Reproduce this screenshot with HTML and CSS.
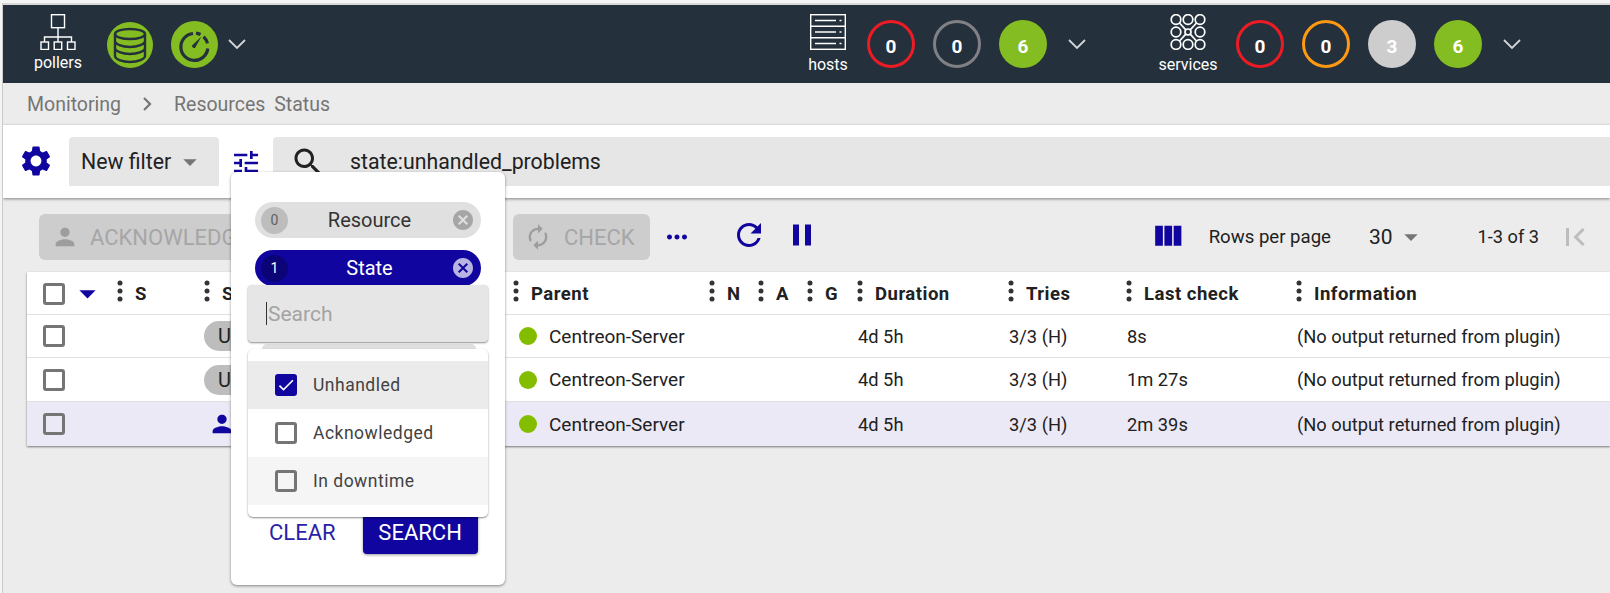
FILE: index.html
```html
<!DOCTYPE html>
<html lang="en">
<head>
  <meta charset="UTF-8">
  <title>Resources Status</title>
  <link rel="stylesheet" href="styles.css">
</head>
<body>
  <svg class="sprites" width="0" height="0">
    <symbol id="i-gear" viewBox="0 0 24 24"><path d="M19.14 12.94c.04-.3.06-.61.06-.94 0-.32-.02-.64-.07-.94l2.03-1.58c.18-.14.23-.41.12-.61l-1.92-3.32c-.12-.22-.37-.29-.59-.22l-2.39.96c-.5-.38-1.03-.7-1.62-.94l-.36-2.54c-.04-.24-.24-.41-.48-.41h-3.84c-.24 0-.43.17-.47.41l-.36 2.54c-.59.24-1.13.57-1.62.94l-2.39-.96c-.22-.08-.47 0-.59.22L2.74 8.87c-.12.21-.08.47.12.61l2.03 1.58c-.05.3-.09.63-.09.94s.02.64.07.94l-2.03 1.58c-.18.14-.23.41-.12.61l1.92 3.32c.12.22.37.29.59.22l2.39-.96c.5.38 1.03.7 1.62.94l.36 2.54c.05.24.24.41.48.41h3.84c.24 0 .44-.17.47-.41l.36-2.54c.59-.24 1.13-.56 1.62-.94l2.39.96c.22.08.47 0 .59-.22l1.92-3.32c.12-.22.07-.47-.12-.61l-2.01-1.58zM12 15.6c-1.98 0-3.6-1.62-3.6-3.6s1.62-3.6 3.6-3.6 3.6 1.62 3.6 3.6-1.62 3.6-3.6 3.6z"/></symbol>
    <symbol id="i-tune" viewBox="0 0 24 24"><path d="M3 17v2h6v-2H3zM3 5v2h10V5H3zm10 16v-2h8v-2h-8v-2h-2v6h2zM7 9v2H3v2h4v2h2V9H7zm14 4v-2H11v2h10zm-6-4h2V7h4V5h-4V3h-2v6z"/></symbol>
    <symbol id="i-search" viewBox="0 0 24 24"><path d="M15.5 14h-.79l-.28-.27C15.41 12.59 16 11.11 16 9.5 16 5.91 13.09 3 9.5 3S3 5.91 3 9.5 5.91 16 9.5 16c1.61 0 3.09-.59 4.23-1.57l.27.28v.79l5 4.99L20.49 19l-4.99-5zm-6 0C7.01 14 5 11.99 5 9.5S7.01 5 9.5 5 14 7.01 14 9.5 11.99 14 9.5 14z"/></symbol>
    <symbol id="i-person" viewBox="0 0 24 24"><path d="M12 12c2.21 0 4-1.79 4-4s-1.79-4-4-4-4 1.79-4 4 1.79 4 4 4zm0 2c-2.67 0-8 1.34-8 4v2h16v-2c0-2.66-5.33-4-8-4z"/></symbol>
    <symbol id="i-renew" viewBox="0 0 24 24"><path d="M12 6v3l4-4-4-4v3c-4.42 0-8 3.58-8 8 0 1.57.46 3.03 1.24 4.26L6.7 14.8c-.45-.83-.7-1.79-.7-2.8 0-3.31 2.69-6 6-6zm6.76 1.74L17.3 9.2c.44.84.7 1.79.7 2.8 0 3.31-2.69 6-6 6v-3l-4 4 4 4v-3c4.42 0 8-3.58 8-8 0-1.57-.46-3.03-1.24-4.26z"/></symbol>
    <symbol id="i-more" viewBox="0 0 24 24"><path d="M6 10c-1.1 0-2 .9-2 2s.9 2 2 2 2-.9 2-2-.9-2-2-2zm12 0c-1.1 0-2 .9-2 2s.9 2 2 2 2-.9 2-2-.9-2-2-2zm-6 0c-1.1 0-2 .9-2 2s.9 2 2 2 2-.9 2-2-.9-2-2-2z"/></symbol>
    <symbol id="i-refresh" viewBox="0 0 24 24"><path d="M17.65 6.35C16.2 4.9 14.21 4 12 4c-4.42 0-7.99 3.58-7.99 8s3.57 8 7.99 8c3.73 0 6.84-2.55 7.73-6h-2.08c-.82 2.33-3.04 4-5.65 4-3.31 0-6-2.69-6-6s2.69-6 6-6c1.66 0 3.14.69 4.22 1.78L13 11h7V4l-2.35 2.35z"/></symbol>
    <symbol id="i-pause" viewBox="0 0 24 24"><path d="M6 19h4V5H6v14zm8-14v14h4V5h-4z"/></symbol>
    <symbol id="i-columns" viewBox="0 0 24 24"><path d="M10 18h5V5h-5v13zm-6 0h5V5H4v13zM16 5v13h5V5h-5z"/></symbol>
    <symbol id="i-first" viewBox="0 0 24 24"><path d="M18.41 16.59L13.82 12l4.59-4.59L17 6l-6 6 6 6zM6 6h2v12H6z"/></symbol>
    <symbol id="i-cancel" viewBox="0 0 24 24"><path d="M12 2C6.47 2 2 6.47 2 12s4.47 10 10 10 10-4.47 10-10S17.53 2 12 2zm5 13.59L15.59 17 12 13.41 8.41 17 7 15.59 10.59 12 7 8.41 8.41 7 12 10.59 15.59 7 17 8.41 13.41 12 17 15.59z"/></symbol>
    <symbol id="i-drop" viewBox="0 0 24 24"><path d="M7 10l5 5 5-5z"/></symbol>
    <symbol id="i-check" viewBox="0 0 24 24"><path d="M9 16.17L4.83 12l-1.42 1.41L9 19 21 7l-1.41-1.41z"/></symbol>
    <symbol id="i-chevron" viewBox="0 0 18 11"><path d="M1 1l8 8 8-8" fill="none" stroke="currentColor" stroke-width="1.8"/></symbol>
    <symbol id="i-dots" viewBox="0 0 6 22"><circle cx="3" cy="3" r="2.5"/><circle cx="3" cy="11" r="2.5"/><circle cx="3" cy="19" r="2.5"/></symbol>
  </svg>

  <div class="page">
    <header class="topbar">
      <div class="top-item pollers">
        <svg class="top-icon" viewBox="0 0 36 36">
          <rect x="11.500" y="0.700" width="13" height="13"/>
          <path d="M18 14v9M4.500 28v-5h27v5M18 23v5"/>
          <rect x="1" y="28" width="7.500" height="7.500"/>
          <rect x="14.200" y="28" width="7.500" height="7.500"/>
          <rect x="27.500" y="28" width="7.500" height="7.500"/>
        </svg>
        <span>pollers</span>
      </div>
      <svg class="state-icon db" viewBox="0 0 46 46">
        <circle cx="23" cy="23" r="23" fill="#84bd21"/>
        <g fill="none" stroke="#24303c" stroke-width="2.400">
          <ellipse cx="23" cy="12" rx="15" ry="5"/>
          <path d="M8 12v22c0 3 7 6 15 6s15-3 15-6V12M8 19c0 3 7 6 15 6s15-3 15-6M8 26c0 3 7 6 15 6s15-3 15-6"/>
        </g>
      </svg>
      <svg class="state-icon gauge" viewBox="0 0 47 47">
        <circle cx="23.500" cy="23.500" r="23.500" fill="#84bd21"/>
        <g fill="none" stroke="#24303c" stroke-width="3.200">
          <path d="M36.800 27.500A13.500 13.500 0 1 1 22 12.500"/>
          <path d="M25 12.200a13.500 13.500 0 0 1 4.500 1.300M32.500 15.800a13.500 13.500 0 0 1 4 6.500"/>
        </g>
        <path d="M21 24.500l9.500-9-6.500 11.500a2.400 2.400 0 0 1-3-2.500z" fill="#24303c"/>
      </svg>
      <svg class="chevron first-chevron"><use href="#i-chevron"/></svg>

      <div class="top-item hosts">
        <svg class="top-icon" viewBox="0 0 36 36">
          <rect x="0.700" y="0.700" width="34.600" height="34.600"/>
          <path d="M1 12.200h34M1 23.700h34M5 6.500h21M5 18h21M5 29.500h21"/>
          <path d="M29.500 6.500h2M29.500 18h2M29.500 29.500h2"/>
        </svg>
        <span>hosts</span>
      </div>
      <div class="counters">
        <div class="counter outline red">0</div>
        <div class="counter outline grey">0</div>
        <div class="counter green">6</div>
      </div>
      <svg class="chevron"><use href="#i-chevron"/></svg>

      <div class="top-item services">
        <svg class="top-icon services-icon" viewBox="0 0 36 36">
          <circle cx="6" cy="5.500" r="4.800"/><circle cx="18" cy="5.500" r="4.800"/><circle cx="30" cy="5.500" r="4.800"/>
          <circle cx="6" cy="18" r="4.800"/><circle cx="18" cy="18" r="3"/><circle cx="30" cy="18" r="4.800"/>
          <circle cx="6" cy="30.500" r="4.800"/><circle cx="18" cy="30.500" r="4.800"/><circle cx="30" cy="30.500" r="4.800"/>
          <path d="M9.500 9l6.300 6.800M26.500 9l-6.300 6.800M9.500 27l6.300-6.800M26.500 27l-6.300-6.800"/>
        </svg>
        <span>services</span>
      </div>
      <div class="counters">
        <div class="counter outline red">0</div>
        <div class="counter outline orange">0</div>
        <div class="counter silver">3</div>
        <div class="counter green">6</div>
      </div>
      <svg class="chevron"><use href="#i-chevron"/></svg>
    </header>

    <nav class="crumbs">
      <span>Monitoring</span>
      <svg viewBox="0 0 12 14"><path d="M2 1l6 6-6 6" fill="none" stroke="currentColor" stroke-width="2.200"/></svg>
      <span>Resources Status</span>
    </nav>

    <section class="filter-bar">
      <svg class="icon gear"><use href="#i-gear"/></svg>
      <div class="filter-select">New filter <svg class="drop"><use href="#i-drop"/></svg></div>
      <svg class="icon tune"><use href="#i-tune"/></svg>
      <div class="search-input">
        <svg class="icon"><use href="#i-search"/></svg>
        <span>state:unhandled_problems</span>
      </div>
    </section>

    <section class="actions">
      <div class="action ack"><svg class="icon"><use href="#i-person"/></svg>ACKNOWLEDGE</div>
      <div class="action check"><svg class="icon"><use href="#i-renew"/></svg>CHECK</div>
      <svg class="icon more"><use href="#i-more"/></svg>
      <svg class="icon refresh"><use href="#i-refresh"/></svg>
      <svg class="icon pause"><use href="#i-pause"/></svg>
      <div class="pager">
        <svg class="icon columns"><use href="#i-columns"/></svg>
        <span class="rows-label">Rows per page</span>
        <span class="rows-value">30</span>
        <svg class="drop"><use href="#i-drop"/></svg>
        <span class="rows-range">1-3 of 3</span>
        <svg class="icon first-page"><use href="#i-first"/></svg>
      </div>
    </section>

    <section class="table">
      <div class="row head">
        <div class="cell"><span class="box"></span></div>
        <div class="cell"><svg class="sort"><use href="#i-drop"/></svg></div>
        <div class="cell"><svg class="dots"><use href="#i-dots"/></svg>S</div>
        <div class="cell"><svg class="dots"><use href="#i-dots"/></svg>S</div>
        <div class="cell"><svg class="dots"><use href="#i-dots"/></svg>Parent</div>
        <div class="cell"><svg class="dots"><use href="#i-dots"/></svg>N</div>
        <div class="cell"><svg class="dots"><use href="#i-dots"/></svg>A</div>
        <div class="cell"><svg class="dots"><use href="#i-dots"/></svg>G</div>
        <div class="cell"><svg class="dots"><use href="#i-dots"/></svg>Duration</div>
        <div class="cell"><svg class="dots"><use href="#i-dots"/></svg>Tries</div>
        <div class="cell"><svg class="dots"><use href="#i-dots"/></svg>Last check</div>
        <div class="cell"><svg class="dots"><use href="#i-dots"/></svg>Information</div>
      </div>
      <div class="row">
        <div class="cell"><span class="box"></span></div>
        <div class="cell"></div>
        <div class="cell"></div>
        <div class="cell"><span class="status-chip">Unknown</span></div>
        <div class="cell parent"><span class="dot"></span>Centreon-Server</div>
        <div class="cell"></div>
        <div class="cell"></div>
        <div class="cell"></div>
        <div class="cell text">4d 5h</div>
        <div class="cell text">3/3 (H)</div>
        <div class="cell text">8s</div>
        <div class="cell text">(No output returned from plugin)</div>
      </div>
      <div class="row">
        <div class="cell"><span class="box"></span></div>
        <div class="cell"></div>
        <div class="cell"></div>
        <div class="cell"><span class="status-chip">Unknown</span></div>
        <div class="cell parent"><span class="dot"></span>Centreon-Server</div>
        <div class="cell"></div>
        <div class="cell"></div>
        <div class="cell"></div>
        <div class="cell text">4d 5h</div>
        <div class="cell text">3/3 (H)</div>
        <div class="cell text">1m 27s</div>
        <div class="cell text">(No output returned from plugin)</div>
      </div>
      <div class="row selected">
        <div class="cell"><span class="box"></span></div>
        <div class="cell"></div>
        <div class="cell"></div>
        <div class="cell"><svg class="icon acked"><use href="#i-person"/></svg></div>
        <div class="cell parent"><span class="dot"></span>Centreon-Server</div>
        <div class="cell"></div>
        <div class="cell"></div>
        <div class="cell"></div>
        <div class="cell text">4d 5h</div>
        <div class="cell text">3/3 (H)</div>
        <div class="cell text">2m 39s</div>
        <div class="cell text">(No output returned from plugin)</div>
      </div>
    </section>
  </div>

  <!-- criteria popup lies over the filter bar and the table -->
  <div class="popup">
    <div class="chip">
      <span class="chip-count">0</span>
      <span class="chip-label">Resource</span>
      <svg class="chip-clear"><use href="#i-cancel"/></svg>
    </div>
    <div class="chip active">
      <span class="chip-count">1</span>
      <span class="chip-label">State</span>
      <svg class="chip-clear"><use href="#i-cancel"/></svg>
    </div>
    <div class="popup-search"><span class="caret"></span><span>Search</span></div>
    <div class="list-edge"></div>
    <ul class="options">
      <li class="current"><span class="box checked"><svg><use href="#i-check"/></svg></span>Unhandled</li>
      <li><span class="box"></span>Acknowledged</li>
      <li class="hover"><span class="box"></span>In downtime</li>
    </ul>
    <div class="popup-buttons">
      <span class="clear-btn">CLEAR</span>
      <span class="search-btn">SEARCH</span>
    </div>
  </div>
</body>
</html>
```

FILE: styles.css
```css
* {
  box-sizing: border-box;
}

html, body {
  height: 100%;
}

body {
  margin: 0;
  overflow: hidden;
  background-color: #f4f4f4;
  font-family: Roboto, "Liberation Sans", sans-serif;
  color: #212121;
  position: relative;
}

.sprites {
  position: absolute;
}

svg {
  display: block;
  fill: currentColor;
  flex: none;
}

.page {
  height: 100%;
  margin: 3px 0 0 2px;
  padding-top: 2px;
  border-left: 1px solid #cbcbcb;
  background-color: #ececec;
  background-image: linear-gradient(#d8d8d8, #d8d8d8);
  background-repeat: no-repeat;
  background-size: 100% 2px;
  overflow: hidden;
}

.icon {
  width: 24px;
  height: 24px;
}

/* top bar */
.topbar {
  display: flex;
  align-items: center;
  height: 78px;
  padding-left: 25px;
  background-color: #24303c;
  color: #fff;
}

.top-item {
  display: flex;
  flex-direction: column;
  align-items: center;
  width: 60px;
  height: 64px;
  margin-top: 3px;
  font-size: 16px;
  line-height: 19px;
}

.top-icon {
  width: 36px;
  height: 36px;
  margin-bottom: 5px;
  fill: none;
  stroke: #fff;
  stroke-width: 1.4;
}

.pollers .top-icon {
  margin-bottom: 3px;
}

.services-icon {
  stroke-width: 1.7;
}

.state-icon {
  width: 46px;
  height: 46px;
  margin-top: 1px;
}

.db {
  margin-left: 19px;
}

.gauge {
  width: 47px;
  height: 47px;
  margin-left: 18px;
}

.chevron {
  width: 18px;
  height: 11px;
  margin-left: 21px;
  color: #d3d6d8;
}

.first-chevron {
  margin-left: 10px;
}

.hosts {
  margin-left: 552px;
}

.services {
  margin-left: 72px;
}

.counters {
  display: flex;
  gap: 18px;
  margin-left: 9px;
}

.services + .counters {
  margin-left: 18px;
}

.counter {
  display: flex;
  align-items: center;
  justify-content: center;
  width: 48px;
  height: 48px;
  padding-top: 5px;
  border-radius: 50%;
  font-size: 19px;
  font-weight: 700;
}

.outline {
  border: 3px solid;
}

.red {
  border-color: #ed1c24;
}

.grey {
  border-color: #818185;
}

.orange {
  border-color: #ff9913;
}

.green {
  background-color: #84bd21;
}

.silver {
  background-color: #cdcdcd;
}

/* breadcrumb */
.crumbs {
  display: flex;
  align-items: center;
  height: 42px;
  padding-left: 24px;
  font-size: 19.500px;
  word-spacing: 4px;
  color: #757575;
}

.crumbs svg {
  width: 12px;
  height: 14px;
  margin: 0 20px 0 21px;
}

/* filter bar */
.filter-bar {
  display: flex;
  align-items: flex-start;
  height: 73px;
  padding: 12px 0 0 15px;
  background-color: #fff;
  box-shadow: 0 1px 3px rgba(0, 0, 0, 0.45);
  font-size: 21.300px;
  position: relative;
}

.gear {
  width: 36px;
  height: 36px;
  margin-top: 6px;
  color: #10069f;
}

.filter-select {
  display: flex;
  align-items: center;
  width: 150px;
  height: 49px;
  margin-left: 15px;
  padding-left: 12px;
  border-radius: 4px 4px 0 0;
  background-color: #e6e6e6;
}

.drop {
  width: 32px;
  height: 32px;
  color: #757575;
}

.filter-select .drop {
  margin-left: 3px;
}

.tune {
  width: 32px;
  height: 32px;
  margin: 10px 0 0 11px;
  color: #10069f;
}

.search-input {
  display: flex;
  align-items: center;
  flex: 1;
  height: 49px;
  margin-left: 11px;
  padding-left: 17px;
  background-color: #e6e6e6;
  border-radius: 4px 0 0 0;
}

.search-input .icon {
  width: 36px;
  height: 36px;
  margin-right: 24px;
}

/* action buttons */
.actions {
  display: flex;
  align-items: center;
  height: 74px;
  padding: 4px 17px 0 36px;
}

.action {
  display: flex;
  align-items: center;
  height: 46px;
  border-radius: 6px;
  background-color: #cdcdcd;
  color: #a6a6a6;
  font-size: 22px;
}

.action .icon {
  color: #9d9d9d;
  width: 28px;
  height: 28px;
}

.ack {
  width: 259px;
  padding-left: 12px;
}

.ack .icon {
  margin-right: 11px;
}

.check {
  width: 137px;
  margin-left: 215px;
  padding-left: 11px;
}

.check .icon {
  margin-right: 12px;
}

.more {
  width: 30px;
  height: 30px;
  margin-left: 12px;
  color: #10069f;
}

.refresh {
  width: 36px;
  height: 36px;
  margin: -4px 0 0 39px;
  color: #10069f;
}

.pause {
  width: 36px;
  height: 36px;
  margin: -4px 0 0 17px;
  color: #10069f;
}

.pager {
  display: flex;
  align-items: center;
  margin-top: -1px;
  margin-left: auto;
  font-size: 18.600px;
}

.columns {
  width: 37px;
  height: 37px;
  color: #10069f;
}

.rows-label {
  margin-left: 23px;
}

.rows-value {
  margin-left: 38px;
  font-size: 21px;
}

.pager .drop {
  margin-left: 2px;
}

.rows-range {
  margin-left: 51px;
  font-size: 18.200px;
}

.first-page {
  width: 36px;
  height: 36px;
  margin-left: 18px;
  color: #bdbdbd;
}

/* table */
.table {
  margin-left: 24px;
  background-color: #fff;
  box-shadow: 0 1px 2px rgba(0, 0, 0, 0.5);
}

.row {
  display: grid;
  grid-template-columns: 43px 43px 87px 309px 196px 49px 49px 50px 151px 118px 170px 1fr;
  height: 44px;
  border-bottom: 1px solid #e0e0e0;
  font-size: 18.300px;
}

.row:nth-child(2) {
  height: 43px;
}

.row:last-child {
  border-bottom: 0;
}

.row.head {
  height: 43px;
  font-size: 18.500px;
  font-weight: 700;
  letter-spacing: 0.5px;
}

.row.selected {
  background-color: #ece9f6;
}

.cell {
  display: flex;
  align-items: center;
  min-width: 0;
  white-space: nowrap;
}

.cell .box {
  margin-left: 16px;
}

.head .cell {
  padding-top: 1px;
}

.dots {
  width: 6px;
  height: 22px;
  margin: -6px 12px 0 4px;
  color: #333;
}

.sort {
  width: 39px;
  height: 39px;
  margin-left: -2px;
  color: #10069f;
}

.text {
  padding-left: 5px;
}

.parent {
  padding-left: 10px;
  font-size: 19px;
}

.dot {
  width: 18px;
  height: 18px;
  margin-right: 12px;
  border-radius: 50%;
  background-color: #84bd00;
}

.box {
  display: flex;
  align-items: center;
  justify-content: center;
  width: 22px;
  height: 22px;
  border: 3px solid #757575;
  border-radius: 3px;
  flex: none;
}

.box.checked {
  border-color: #10069f;
  background-color: #10069f;
  color: #fff;
}

.box.checked svg {
  width: 20px;
  height: 20px;
}

.status-chip {
  width: 120px;
  height: 30px;
  margin-left: 4px;
  padding: 3px 0 0 14px;
  border-radius: 15px;
  background-color: #bdbdbd;
  font-size: 20px;
}

.acked {
  width: 28px;
  height: 28px;
  margin-left: 8px;
  color: #10069f;
}

/* criteria popup */
.popup {
  position: absolute;
  left: 231px;
  top: 172px;
  width: 274px;
  height: 413px;
  padding-top: 30px;
  border-radius: 6px;
  background-color: #fff;
  box-shadow: 0 1px 3px rgba(0, 0, 0, 0.45);
}

.chip {
  display: flex;
  align-items: center;
  justify-content: space-between;
  width: 226px;
  height: 36px;
  margin: 0 0 12px 24px;
  padding: 0 6px;
  border-radius: 18px;
  background-color: #e0e0e0;
  color: #333;
  font-size: 20px;
}

.chip.active {
  margin-bottom: -1px;
  background-color: #10069f;
  color: #fff;
}

.chip-count {
  display: flex;
  align-items: center;
  justify-content: center;
  width: 27px;
  height: 27px;
  border-radius: 50%;
  background-color: #bdbdbd;
  color: #616161;
  font-size: 14px;
}

.active .chip-count {
  background-color: #0b0477;
  color: #fff;
}

.chip-clear {
  width: 24px;
  height: 24px;
  color: #a6a6a6;
}

.active .chip-clear {
  color: #b7b4e2;
}

.popup-search {
  display: flex;
  align-items: center;
  width: 240px;
  height: 57px;
  margin-left: 17px;
  padding-left: 18px;
  border-radius: 4px;
  background-color: #e6e6e6;
  box-shadow: 0 1px 2px rgba(0, 0, 0, 0.45);
  color: #a3a3a3;
  font-size: 21px;
  position: relative;
}

.caret {
  width: 1px;
  height: 23px;
  margin-right: 1px;
  background-color: #333;
}

.list-edge {
  width: 214px;
  height: 5px;
  margin: 2px 0 0 31px;
  border-radius: 8px 8px 0 0;
  background-color: #e0e0e0;
}

.options {
  width: 240px;
  height: 168px;
  margin: 0 0 0 17px;
  padding: 12px 0;
  list-style: none;
  border-radius: 5px;
  background-color: #fff;
  box-shadow: 0 1px 2px rgba(0, 0, 0, 0.45);
  position: relative;
  color: #424242;
  font-size: 17.500px;
  letter-spacing: 0.5px;
}

.options li {
  display: flex;
  align-items: center;
  height: 48px;
  padding-left: 27px;
}

.options .box {
  margin-right: 16px;
}

.options .current {
  background-color: #ebebeb;
}

.options .hover {
  background-color: #f5f5f5;
}

.popup-buttons {
  display: flex;
  align-items: center;
  margin: -8px 0 0 38px;
  font-size: 22px;
}

.clear-btn {
  padding-top: 2px;
  color: #2a1fa8;
}

.search-btn {
  width: 115px;
  height: 45px;
  margin-left: 27px;
  border-radius: 4px;
  background-color: #10069f;
  box-shadow: 0 1px 3px rgba(0, 0, 0, 0.4);
  color: #fff;
  text-align: center;
  line-height: 47px;
}
```
